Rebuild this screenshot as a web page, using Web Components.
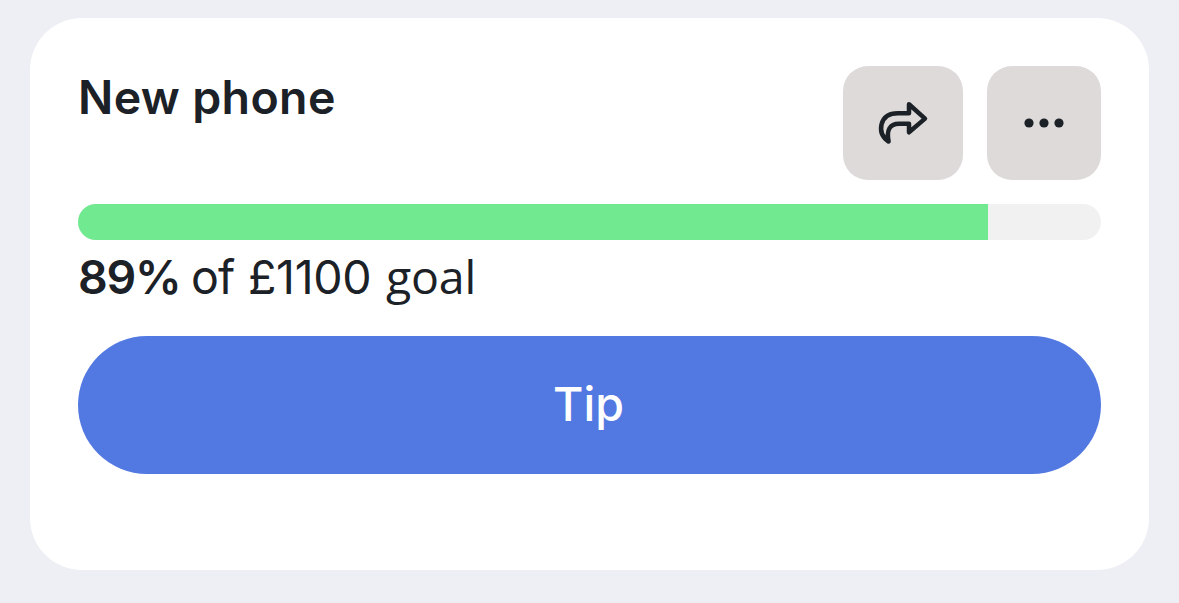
<!DOCTYPE html>
<html lang="en">
<head>
<meta charset="utf-8">
<title>New phone</title>
<style>
body{margin:0;height:603px;overflow:hidden;background:#eeeff5;color:#1b2126;font-family:Inter,"Open Sans",sans-serif}
</style>
</head>
<body>
<goal-card>
  <span slot="title">New phone</span>
  <icon-button slot="actions" label="Share" style="--w:120px">
    <svg width="54" height="48" viewBox="876 99 54 48" fill="none" stroke="#1b2126" stroke-width="4.500" stroke-linejoin="round" stroke-linecap="round"><path d="M909 104.300L925 118.600L909 132.300V123.800H899C889.500 123.800 886.300 130.500 888.600 141.500C882.500 137.500 880 131.500 881.500 124.500C883.500 116.500 890 113.300 898 113.300H909Z"/></svg>
  </icon-button>
  <icon-button slot="actions" label="More" style="--w:114px">
    <svg width="42" height="12" viewBox="0 0 42 12" fill="#1b2126"><circle cx="6" cy="6" r="4.600"/><circle cx="21" cy="6" r="4.600"/><circle cx="36" cy="6" r="4.600"/></svg>
  </icon-button>
  <goal-progress percent="89" goal="£1100"></goal-progress>
  <tip-button>Tip</tip-button>
</goal-card>
<script>
class Base extends HTMLElement{
  connectedCallback(){
    if(!this.shadowRoot) this.attachShadow({mode:'open'}).innerHTML=this.render();
  }
}
customElements.define('goal-card',class extends Base{
  render(){return `<style>
    :host{display:block;padding:18px 30px 33px;box-sizing:border-box;height:603px}
    section{box-sizing:border-box;height:552px;padding:48px;border-radius:52px;background:#fff}
    header{display:flex;justify-content:space-between;align-items:flex-start;height:114px;margin-bottom:24px}
    h2{margin:0;padding-top:3px;font-size:46.500px;line-height:56px;font-weight:600;letter-spacing:.35px;white-space:nowrap}
    .actions{display:flex;gap:24px}
  </style><section><header><h2><slot name="title"></slot></h2><div class="actions"><slot name="actions"></slot></div></header><slot></slot></section>`}
});
customElements.define('icon-button',class extends Base{
  render(){return `<style>
    :host{display:block;width:var(--w);height:114px}
    button{display:flex;align-items:center;justify-content:center;width:100%;height:100%;padding:0;border:0;border-radius:25px;background:#dedad9}
  </style><button aria-label="${this.getAttribute('label')}"><slot></slot></button>`}
});
customElements.define('goal-progress',class extends Base{
  render(){const p=this.getAttribute('percent');return `<style>
    :host{display:block;height:132px}
    .track{height:36px;border-radius:18px;background:#f1f1f1;overflow:hidden}
    .fill{height:100%;width:${p}%;background:#71e990}
    p{display:flex;margin:0;padding-top:9px;font-size:46.500px;line-height:56px;white-space:nowrap}
    p>*{flex:none}
    b{width:113px;font-weight:600;letter-spacing:-1.3px}
    .of{width:57px;letter-spacing:-.8px}
    .sum{width:138px;letter-spacing:-.3px}
    .goal{font-family:"Open Sans",sans-serif;line-height:54px;letter-spacing:-.2px}
  </style><div class="track"><div class="fill"></div></div><p><b>${p}%</b><span class="of">of</span><span class="sum">${this.getAttribute('goal')}</span><span class="goal">goal</span></p>`}
});
customElements.define('tip-button',class extends Base{
  render(){return `<style>
    :host{display:block}
    button{display:block;width:100%;height:138px;padding:0 2px 2px 0;border:0;border-radius:69px;background:#5279e2;color:#fff;font:500 46.500px/56px Inter,sans-serif}
  </style><button><slot></slot></button>`}
});
</script>
</body>
</html>
